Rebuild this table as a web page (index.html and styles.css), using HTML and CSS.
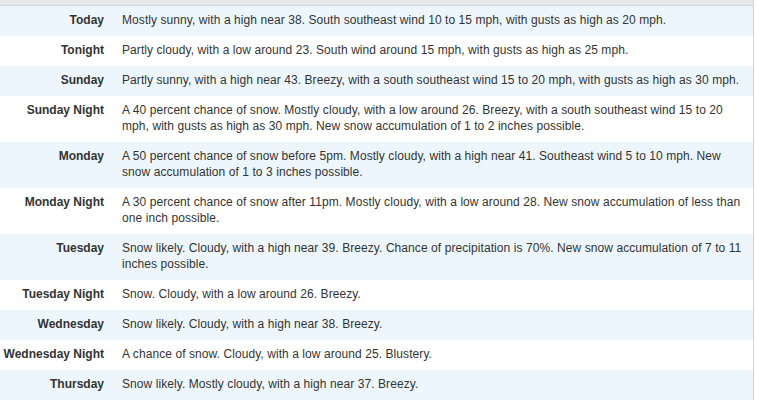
FILE: index.html
```html
<!DOCTYPE html>
<html>
<head>
<meta charset="utf-8">
<link rel="stylesheet" href="styles.css">
</head>
<body>
<div class="panel">
  <table class="forecast">
    <tr><th>Today</th><td>Mostly sunny, with a high near 38. South southeast wind 10 to 15 mph, with gusts as high as 20 mph.</td></tr>
    <tr><th>Tonight</th><td>Partly cloudy, with a low around 23. South wind around 15 mph, with gusts as high as 25 mph.</td></tr>
    <tr><th>Sunday</th><td>Partly sunny, with a high near 43. Breezy, with a south southeast wind 15 to 20 mph, with gusts as high as 30 mph.</td></tr>
    <tr><th>Sunday Night</th><td>A 40 percent chance of snow. Mostly cloudy, with a low around 26. Breezy, with a south southeast wind 15 to 20 mph, with gusts as high as 30 mph. New snow accumulation of 1 to 2 inches possible.</td></tr>
    <tr><th>Monday</th><td>A 50 percent chance of snow before 5pm. Mostly cloudy, with a high near 41. Southeast wind 5 to 10 mph. New snow accumulation of 1 to 3 inches possible.</td></tr>
    <tr><th>Monday Night</th><td>A 30 percent chance of snow after 11pm. Mostly cloudy, with a low around 28. New snow accumulation of less than one inch possible.</td></tr>
    <tr><th>Tuesday</th><td>Snow likely. Cloudy, with a high near 39. Breezy. Chance of precipitation is 70%. New snow accumulation of 7 to 11 inches possible.</td></tr>
    <tr><th>Tuesday Night</th><td>Snow. Cloudy, with a low around 26. Breezy.</td></tr>
    <tr><th>Wednesday</th><td>Snow likely. Cloudy, with a high near 38. Breezy.</td></tr>
    <tr><th>Wednesday Night</th><td>A chance of snow. Cloudy, with a low around 25. Blustery.</td></tr>
    <tr><th>Thursday</th><td>Snow likely. Mostly cloudy, with a high near 37. Breezy.</td></tr>
  </table>
</div>
</body>
</html>
```
FILE: styles.css
```css
html, body {
  margin: 0;
  padding: 0;
  background: #ffffff;
}
body {
  font-family: "Liberation Sans", Arial, sans-serif;
  font-size: 12px;
  color: #333333;
}
.panel {
  width: 753px;
  border-right: 1px solid #d0d0d0;
  background: #e8e8e8;
  padding-top: 5px;
}
.forecast {
  width: 100%;
  border-collapse: collapse;
  border-top: 1px solid #d6d6d6;
  background: #ffffff;
}
.forecast th,
.forecast td {
  vertical-align: top;
  line-height: 16px;
  padding: 6px 0 8px 0;
}
.forecast th {
  width: 104px;
  text-align: right;
  font-weight: bold;
  padding-right: 9px;
  white-space: nowrap;
}
.forecast td {
  text-align: left;
  padding-left: 9px;
  padding-right: 7px;
  letter-spacing: 0.075px;
}
.forecast tr:nth-child(odd) {
  background: #edf6fd;
}
```
